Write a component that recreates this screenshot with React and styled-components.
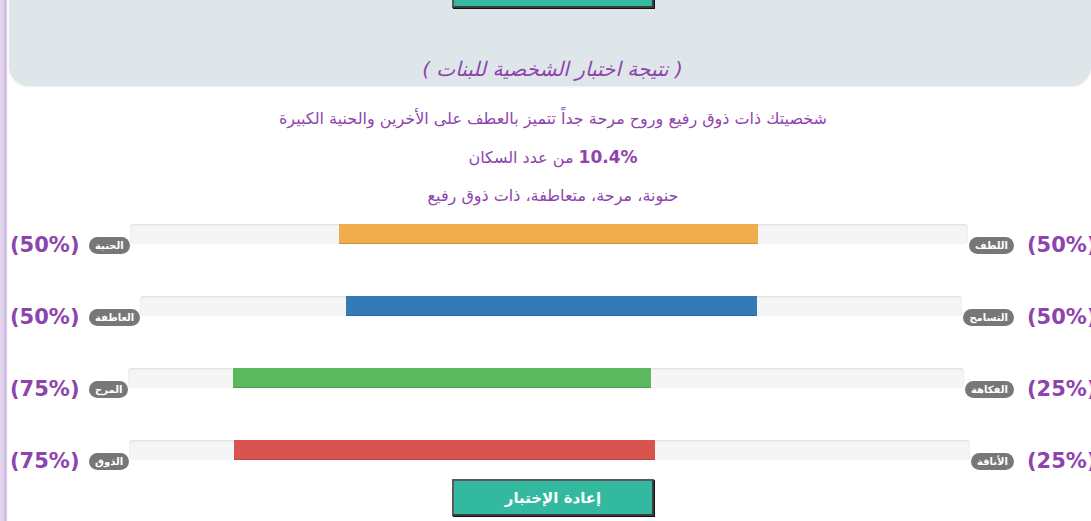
import styled, { createGlobalStyle } from 'styled-components';

const GlobalStyle = createGlobalStyle`
  html, body {
    margin: 0;
    padding: 0;
    background: #fff;
    overflow: hidden;
  }
  body {
    font-family: "DejaVu Sans", Tahoma, sans-serif;
  }
`;

// الإطار الجانبي
const Page = styled.div`
  width: 1101px;
  min-height: 521px;
  padding-left: 8px;
  box-sizing: border-box;
  background: linear-gradient(to right, #e4d9ee 0, #dccdea 4px, #c9ade0 6px, #f4eef8 7px, #fff 8px) no-repeat;
  background-size: 8px 100%;
`;

// الجزء العلوي
const Panel = styled.div`
  margin: 0 10px 0 1px;
  padding: 0 0 5px 5px;
  background: #dfe6e9;
  border-radius: 0 0 20px 20px;
  box-shadow: 0 1px 2px rgba(0, 0, 0, 0.08);
  display: flex;
  flex-direction: column;
  align-items: center;
`;

const Title = styled.h2`
  margin: 49px 0 0;
  font-size: 20px;
  line-height: 24px;
  font-weight: normal;
  font-style: italic;
  color: #8e44ad;
  direction: rtl;
`;

const Button = styled.button`
  width: 202px;
  height: 37px;
  margin-top: ${(props) => (props.top ? '-29px' : '6px')};
  background: #33b9a0;
  border: 2px solid #3c3c3c;
  border-top-color: #5a5a5a;
  border-left-color: #5a5a5a;
  box-shadow: 1px 1px 0 #111;
  color: #fff;
  font-family: "DejaVu Sans", Tahoma, sans-serif;
  font-size: 15px;
  font-weight: bold;
  direction: rtl;
  cursor: pointer;
`;

// النص
const Info = styled.div`
  margin-top: ${(props) => (props.tight ? '0' : '14px')};
  padding-right: 3px;
  text-align: center;
  color: #8e44ad;
  direction: rtl;
`;

const Line = styled.p`
  margin: 0;
  font-size: 16px;
  line-height: 38px;
`;

const Big = styled.b`
  font-size: 17px;
`;

// الأشرطة
const Bars = styled.div`
  margin-top: 8px;
  display: flex;
  flex-direction: column;
  gap: 38px;
  padding: 0 4px 0 2px;
`;

const Row = styled.div`
  height: 34px;
  display: flex;
  align-items: center;
`;

const Pct = styled.span`
  width: 70px;
  flex: none;
  direction: ltr;
  white-space: nowrap;
  font-size: 21px;
  font-weight: bold;
  color: #8e44ad;
  margin: ${(props) => (props.side === 'left' ? '10px 9px 0 0' : '10px 0 0 13px')};
`;

const Badge = styled.span`
  flex: none;
  margin-top: 10px;
  padding: 0 6px;
  height: 17px;
  line-height: 17px;
  border-radius: 9px;
  background: #777;
  color: #fff;
  font-size: 10px;
  font-weight: bold;
  direction: rtl;
  margin-left: ${(props) => (props.side === 'right' ? '1px' : '0')};
`;

const Track = styled.div`
  flex: 1;
  align-self: flex-start;
  margin-top: 1px;
  height: 20px;
  position: relative;
  background: #f5f5f5;
  border-radius: 4px;
  box-shadow: inset 0 1px 2px rgba(0, 0, 0, 0.1);
  overflow: hidden;
`;

const Fill = styled.div`
  position: absolute;
  top: 0;
  bottom: 0;
  background: ${(props) => props.color};
  box-shadow: inset 0 -1px 0 rgba(0, 0, 0, 0.15);
`;

const rows = [
  { left: 'الحنية', leftPct: 50, right: 'اللطف', rightPct: 50, color: '#f0ad4e' },
  { left: 'العاطفة', leftPct: 50, right: 'التسامح', rightPct: 50, color: '#337ab7' },
  { left: 'المرح', leftPct: 75, right: 'الفكاهة', rightPct: 25, color: '#5cb85c' },
  { left: 'الذوق', leftPct: 75, right: 'الأناقة', rightPct: 25, color: '#d9534f' },
];

const App = () => {
  return (
    <>
      <GlobalStyle />
      <Page>
        <Panel>
          <Button top>إعادة الإختبار</Button>
          <Title>( نتيجة اختبار الشخصية للبنات )</Title>
        </Panel>

        <Info>
          <Line>شخصيتك ذات ذوق رفيع وروح مرحة جداً تتميز بالعطف على الأخرين والحنية الكبيرة</Line>
          <Line>
            <Big>10.4%</Big> من عدد السكان
          </Line>
          <Line>حنونة، مرحة، متعاطفة، ذات ذوق رفيع</Line>
        </Info>

        <Bars>
          {rows.map((row) => (
            <Row key={row.left}>
              <Pct side="left">({row.leftPct}%)</Pct>
              <Badge side="left">{row.left}</Badge>
              <Track>
                <Fill
                  color={row.color}
                  style={{ left: `${(100 - row.leftPct) / 2}%`, width: '50%' }}
                />
              </Track>
              <Badge side="right">{row.right}</Badge>
              <Pct side="right">({row.rightPct}%)</Pct>
            </Row>
          ))}
        </Bars>

        <Info tight>
          <Button>إعادة الإختبار</Button>
        </Info>
      </Page>
    </>
  );
};

export default App;
